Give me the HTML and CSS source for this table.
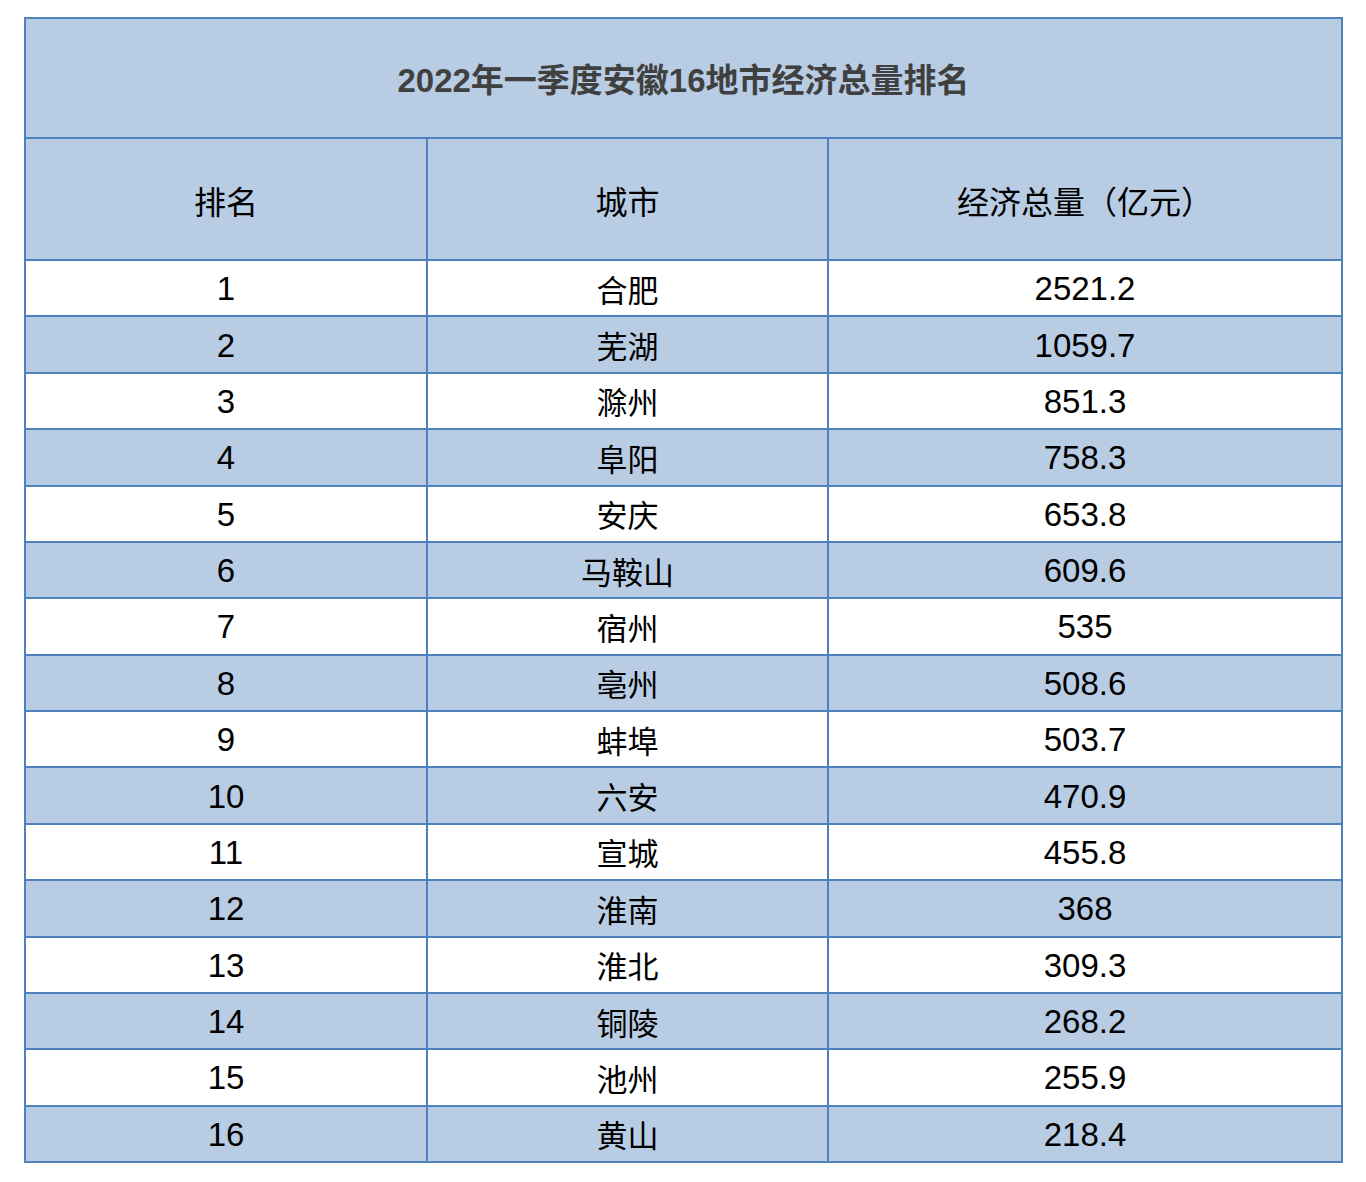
FILE: index.html
```html
<!DOCTYPE html>
<html lang="zh-CN">
<head>
<meta charset="utf-8">
<title>2022年一季度安徽16地市经济总量排名</title>
<link rel="stylesheet" href="styles.css">
</head>
<body>
<div class="table">
  <div class="cell title">2022年一季度安徽16地市经济总量排名</div>
  <div class="cell head">排名</div>
  <div class="cell head">城市</div>
  <div class="cell head">经济总量（亿元）</div>

  <div class="cell row odd num">1</div><div class="cell row odd cn">合肥</div><div class="cell row odd num">2521.2</div>
  <div class="cell row even num">2</div><div class="cell row even cn">芜湖</div><div class="cell row even num">1059.7</div>
  <div class="cell row odd num">3</div><div class="cell row odd cn">滁州</div><div class="cell row odd num">851.3</div>
  <div class="cell row even num">4</div><div class="cell row even cn">阜阳</div><div class="cell row even num">758.3</div>
  <div class="cell row odd num">5</div><div class="cell row odd cn">安庆</div><div class="cell row odd num">653.8</div>
  <div class="cell row even num">6</div><div class="cell row even cn">马鞍山</div><div class="cell row even num">609.6</div>
  <div class="cell row odd num">7</div><div class="cell row odd cn">宿州</div><div class="cell row odd num">535</div>
  <div class="cell row even num">8</div><div class="cell row even cn">亳州</div><div class="cell row even num">508.6</div>
  <div class="cell row odd num">9</div><div class="cell row odd cn">蚌埠</div><div class="cell row odd num">503.7</div>
  <div class="cell row even num">10</div><div class="cell row even cn">六安</div><div class="cell row even num">470.9</div>
  <div class="cell row odd num">11</div><div class="cell row odd cn">宣城</div><div class="cell row odd num">455.8</div>
  <div class="cell row even num">12</div><div class="cell row even cn">淮南</div><div class="cell row even num">368</div>
  <div class="cell row odd num">13</div><div class="cell row odd cn">淮北</div><div class="cell row odd num">309.3</div>
  <div class="cell row even num">14</div><div class="cell row even cn">铜陵</div><div class="cell row even num">268.2</div>
  <div class="cell row odd num">15</div><div class="cell row odd cn">池州</div><div class="cell row odd num">255.9</div>
  <div class="cell row even num">16</div><div class="cell row even cn">黄山</div><div class="cell row even num">218.4</div>
</div>
</body>
</html>
```
FILE: styles.css
```css
html, body {
  margin: 0;
  padding: 0;
  background: #ffffff;
}

body {
  font-family: "Liberation Sans", "Noto Sans CJK SC", sans-serif;
  color: #000000;
}

.table {
  margin: 17px 0 0 24px;
  width: 1315px;
  padding: 2px;
  gap: 2px;
  display: grid;
  grid-template-columns: 400px 399px 512px;
  grid-template-rows: 118px 120px repeat(16, 54.375px);
  background: #4f81bd;
}

.cell {
  display: flex;
  align-items: center;
  justify-content: center;
  background: #b8cce4;
  white-space: nowrap;
}

.title {
  grid-column: 1 / 4;
  font-size: 33px;
  font-weight: bold;
  color: #404040;
}

.head {
  font-size: 32px;
  font-family: "Noto Sans CJK SC", sans-serif;
  padding-top: 2px;
}

.row.odd {
  background: #ffffff;
}

.row.even {
  background: #b8cce4;
}

.num {
  font-size: 33px;
  padding-top: 2px;
}

.cn {
  font-size: 31px;
  font-family: "Noto Sans CJK SC", sans-serif;
}
```
